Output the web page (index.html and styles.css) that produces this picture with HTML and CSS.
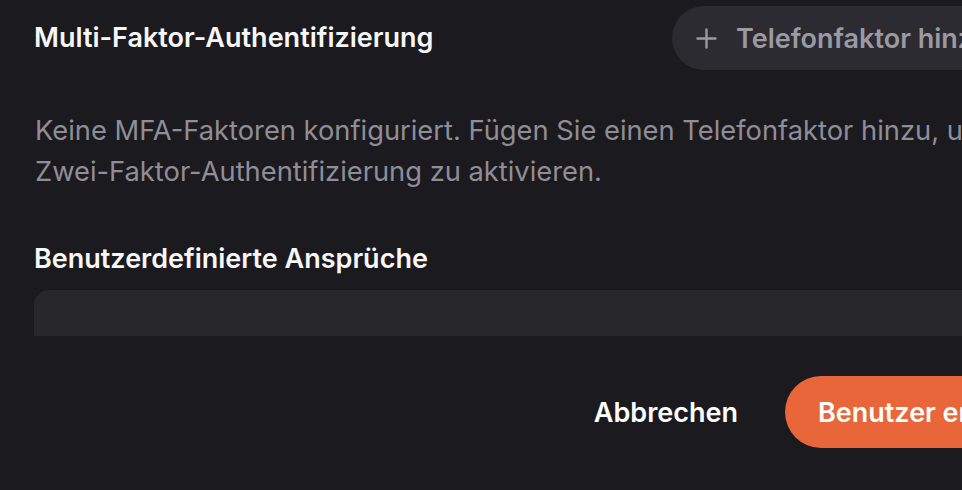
FILE: index.html
```html
<!DOCTYPE html>
<html lang="de">
<head>
<meta charset="utf-8">
<title>Benutzer erstellen</title>
<link rel="stylesheet" href="styles.css">
</head>
<body>
<div class="dialog">
  <div class="body">
    <section class="mfa">
      <div class="mfa-head">
        <h3 class="section-title">Multi-Faktor-Authentifizierung</h3>
        <button class="pill-btn" type="button">
          <svg class="plus" viewBox="0 0 21 21" width="21" height="21" aria-hidden="true"><path d="M10.5 1.5v18M1.5 10.5h18" stroke="currentColor" stroke-width="2.4" stroke-linecap="round" fill="none"/></svg>
          <span>Telefonfaktor hinzufügen</span>
        </button>
      </div>
      <p class="hint">Keine MFA-Faktoren konfiguriert. Fügen Sie einen Telefonfaktor hinzu, um die <span class="nowrap">Zwei-Faktor-Authentifizierung</span> zu aktivieren.</p>
    </section>
    <section class="claims">
      <h3 class="section-title">Benutzerdefinierte Ansprüche</h3>
      <div class="claims-box"></div>
    </section>
  </div>
  <div class="footer">
    <button class="btn-ghost" type="button">Abbrechen</button>
    <button class="btn-primary" type="button">Benutzer erstellen</button>
  </div>
</div>
</body>
</html>
```
FILE: styles.css
```css
html, body {
  margin: 0;
  padding: 0;
  background: #1b1a1f;
  overflow: hidden;
}
body {
  font-family: Inter, "Noto Sans", sans-serif;
  color: #f4f4f5;
  width: 962px;
  height: 490px;
}
.dialog {
  width: 1126px;
  height: 490px;
  display: flex;
  flex-direction: column;
}
.body {
  height: 336px;
  overflow: hidden;
  padding: 6px 35px 0 34px;
  box-sizing: border-box;
}
.mfa-head {
  display: flex;
  align-items: center;
  justify-content: space-between;
}
.section-title {
  margin: 0;
  font-size: 27px;
  line-height: 40px;
  font-weight: 600;
  color: #f7f7f8;
}
.pill-btn {
  display: flex;
  align-items: center;
  gap: 19px;
  height: 64px;
  padding: 0 25px 0 24px;
  border: none;
  border-radius: 32px;
  background: #2c2b31;
  color: #9b9aa3;
  font-family: inherit;
  font-size: 27px;
  font-weight: 600;
}
.plus { display: block; }
.hint {
  margin: 40px 0 0;
  padding-left: 1px;
  font-size: 27.3px;
  line-height: 41px;
  color: #8f8e97;
}
.nowrap { white-space: nowrap; }
.claims {
  margin-top: 47px;
}
.claims-box {
  margin-top: 11px;
  height: 160px;
  border-radius: 15px;
  background: #28272c;
}
.footer {
  flex: 1;
  display: flex;
  justify-content: flex-end;
  align-items: center;
  gap: 47px;
  padding: 0 37px 2px;
}
.btn-ghost {
  border: none;
  background: transparent;
  color: #ffffff;
  font-family: inherit;
  font-size: 27px;
  font-weight: 600;
  padding: 0;
}
.btn-primary {
  height: 72px;
  padding: 0 33px;
  border: none;
  border-radius: 36px;
  background: #e9653a;
  color: #ffffff;
  font-family: inherit;
  font-size: 27px;
  font-weight: 600;
}
```
